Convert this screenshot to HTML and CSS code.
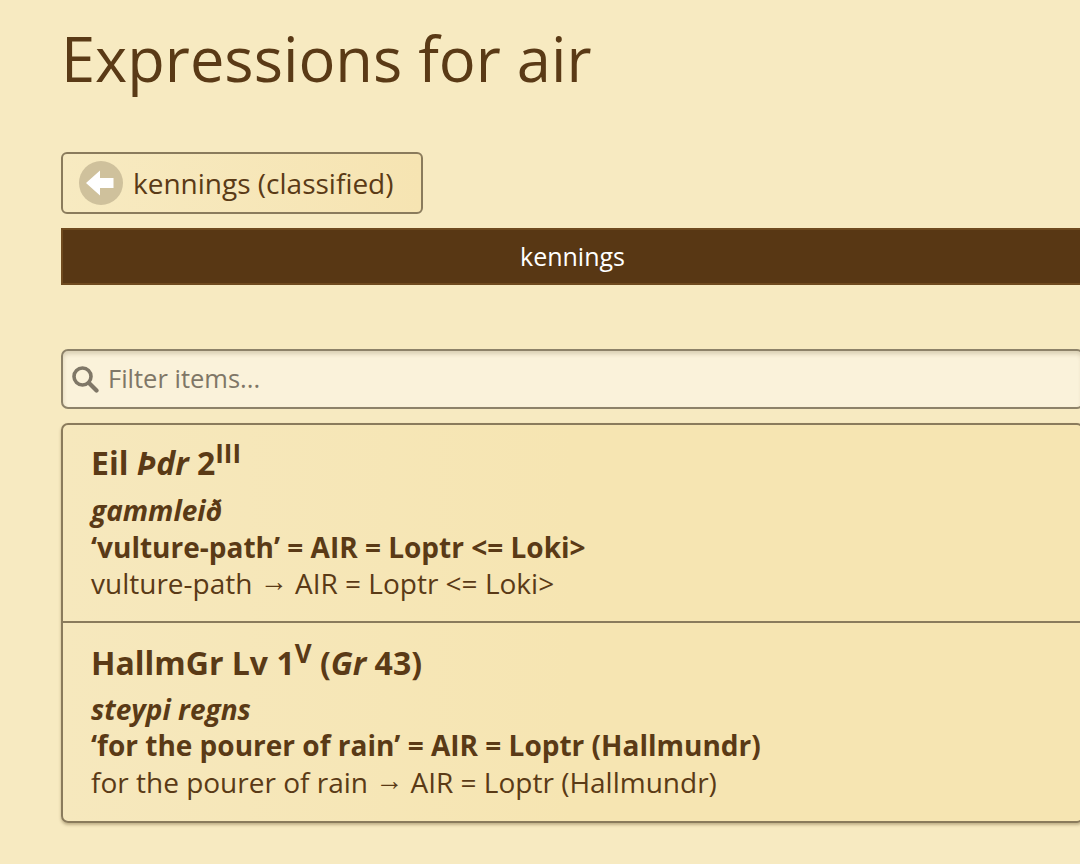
FILE: index.html
```html
<!DOCTYPE html>
<html lang="en">
<head>
  <meta charset="UTF-8">
  <meta name="viewport" content="width=device-width, initial-scale=1.0">
  <title>Expressions for air</title>
  <link rel="stylesheet" href="styles.css">
</head>
<body>
  <main class="page">
    <h1 class="page-title">Expressions for air</h1>

    <a class="back-btn" href="#">
      <span class="back-icon">
        <svg width="30" height="30" viewBox="0 0 30 30"><path d="M0 15 L14 2.5 V10 H27.5 V20 H14 V27.5 Z" fill="#fff"/></svg>
      </span>
      <span>kennings (classified)</span>
    </a>

    <div class="section-bar">kennings</div>

    <div class="filter">
      <svg class="filter-icon" width="28" height="28" viewBox="0 0 28 28"><circle cx="11.5" cy="11.5" r="8.5" fill="none" stroke="#7f7767" stroke-width="3.6"/><path d="M18 18 L25.5 25.5" stroke="#7f7767" stroke-width="4.2" stroke-linecap="round"/></svg>
      <input class="filter-input" type="text" placeholder="Filter items...">
    </div>

    <ul class="items">
      <li class="item">
        <h3 class="item-title">Eil <em>Þdr</em> 2<sup>III</sup></h3>
        <div class="item-term">gammleið</div>
        <div class="item-gloss">‘vulture-path’ = AIR = Loptr &lt;= Loki&gt;</div>
        <div class="item-plain">vulture-path <span class="arrow">→</span> AIR = Loptr &lt;= Loki&gt;</div>
      </li>
      <li class="item">
        <h3 class="item-title">HallmGr Lv 1<sup>V</sup> (<em>Gr</em> 43)</h3>
        <div class="item-term">steypi regns</div>
        <div class="item-gloss">‘for the pourer of rain’ = AIR = Loptr (Hallmundr)</div>
        <div class="item-plain">for the pourer of rain <span class="arrow">→</span> AIR = Loptr (Hallmundr)</div>
      </li>
    </ul>
  </main>
</body>
</html>
```

FILE: styles.css
```css
* {
  box-sizing: border-box;
}

html, body {
  height: 100%;
  overflow: hidden;
}

body {
  margin: 0;
  background-color: #f7eac1;
  color: #5a3a16;
  font-family: 'Open Sans', sans-serif;
}

.page {
  width: 1023px;
  margin-left: 61px;
  padding-top: 20px;
}

.page-title {
  margin: 0 0 56px;
  font-size: 61.4px;
  line-height: 76px;
  font-weight: 400;
}

.back-btn {
  display: inline-flex;
  align-items: center;
  gap: 10px;
  height: 62px;
  padding: 0 27px 0 16px;
  border: 2px solid #8a7b5c;
  border-radius: 6px;
  background: linear-gradient(90deg, #f7eac1, #f6e4b2);
  color: #5a3a16;
  font-size: 28px;
  text-decoration: none;
  vertical-align: top;
}

.back-icon {
  display: flex;
  align-items: center;
  justify-content: center;
  width: 44px;
  height: 44px;
  border-radius: 50%;
  background-color: #cfc19c;
}

.section-bar {
  height: 57px;
  margin-top: 14px;
  border: 2px solid #6f4a1f;
  background-color: #583714;
  color: #fff;
  font-size: 25px;
  line-height: 53px;
  text-align: center;
}

.filter {
  display: flex;
  align-items: center;
  gap: 9px;
  height: 60px;
  margin-top: 64px;
  padding: 0 8px;
  border: 2px solid #8d8269;
  border-radius: 7px;
  background-color: #faf2da;
  box-shadow: inset 0 3px 4px rgba(90, 70, 30, 0.2);
}

.filter-icon {
  flex-shrink: 0;
}

.filter-input {
  flex: 1;
  padding: 0 0 2px;
  border: none;
  background: transparent;
  outline: none;
  color: #5a3a16;
  font-family: inherit;
  font-size: 25.5px;
}

.filter-input::placeholder {
  color: #7f7767;
  opacity: 1;
}

.items {
  margin: 14px 0 0;
  padding: 0;
  list-style: none;
  border: 2px solid #8a7b5c;
  border-radius: 7px;
  background: linear-gradient(90deg, #f6e8bd, #f6e5b2 50%);
  box-shadow: 0 2px 3px rgba(90, 70, 30, 0.35);
}

.item {
  padding: 13px 28px 19px;
  font-size: 28px;
  line-height: 36.5px;
}

.item:last-child {
  padding: 15px 28px 21px;
}

.item + .item {
  border-top: 2px solid #8a7b5c;
}

.item-title {
  margin: 0 0 4px;
  font-size: 32px;
  line-height: 50px;
  font-weight: 700;
}

.item:last-child .item-title {
  margin-bottom: 3px;
}

.item-title sup {
  font-size: 26px;
  line-height: 0;
  font-weight: 700;
  vertical-align: 12px;
}

.item-term {
  font-weight: 700;
  font-style: italic;
}

.item-gloss {
  font-weight: 700;
}

.arrow {
  font-family: 'Liberation Sans', sans-serif;
  line-height: 0;
  vertical-align: 3px;
}
```
